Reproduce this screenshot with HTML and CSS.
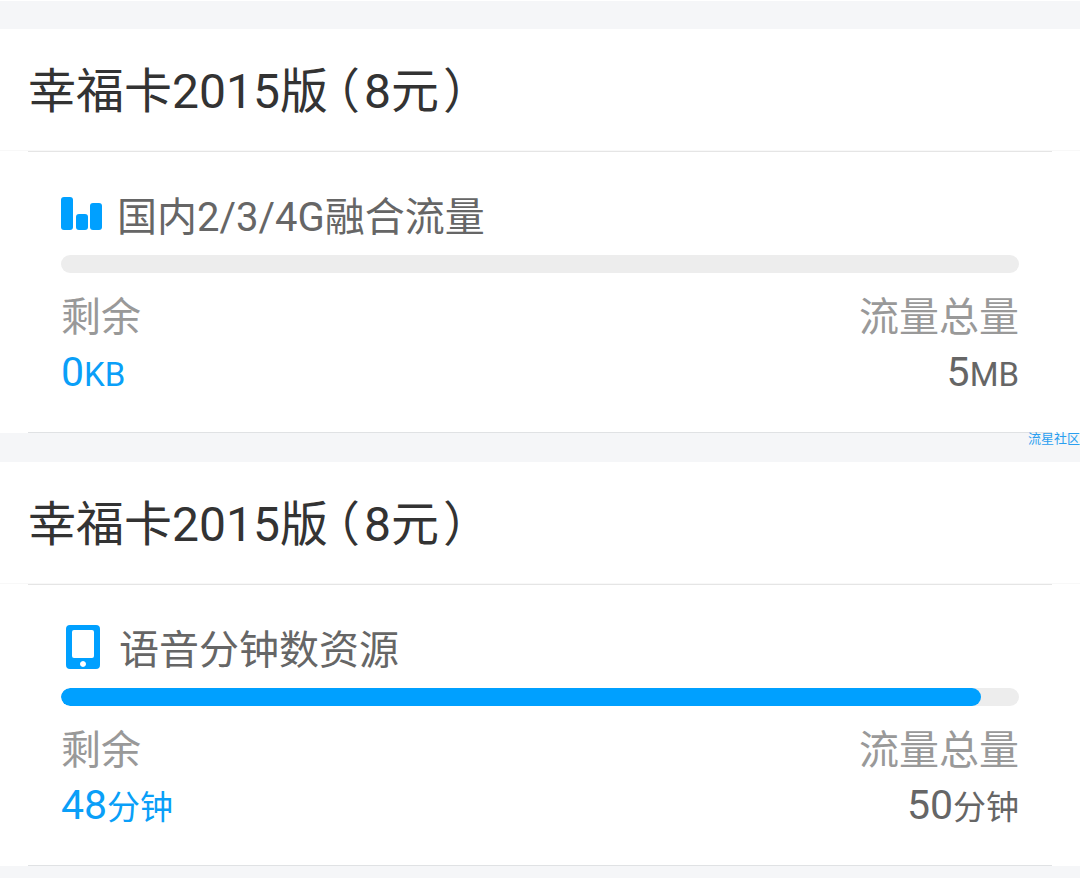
FILE: index.html
```html
<!DOCTYPE html>
<html lang="zh-CN">
<head>
<meta charset="utf-8">
<meta name="viewport" content="width=device-width, initial-scale=1">
<title>套餐余量</title>
<link rel="stylesheet" href="styles.css">
</head>
<body>
<main class="plans">
  <section class="plan">
    <h2 class="plan-title">幸福卡2015版<span class="open">（</span>8元<span class="close">）</span></h2>
    <div class="usage">
      <h3 class="usage-title">
        <svg class="icon" viewBox="0 0 44 52" aria-hidden="true"><rect x="0" y="5" width="12" height="33" rx="3"/><rect x="15" y="22" width="12" height="16" rx="3"/><rect x="29" y="11" width="12" height="27" rx="3"/></svg>
        <span>国内2/3/4G融合流量</span>
      </h3>
      <div class="bar" role="progressbar" aria-label="剩余流量" aria-valuenow="0" aria-valuemin="0" aria-valuemax="5"><div class="fill" style="width:0%"></div></div>
      <dl class="stats">
        <div class="stat"><dt>剩余</dt><dd class="left">0<small>KB</small></dd></div>
        <div class="stat total"><dt>流量总量</dt><dd>5<small>MB</small></dd></div>
      </dl>
    </div>
    <span class="watermark">流星社区</span>
  </section>
  <section class="plan">
    <h2 class="plan-title">幸福卡2015版<span class="open">（</span>8元<span class="close">）</span></h2>
    <div class="usage">
      <h3 class="usage-title">
        <svg class="icon phone" viewBox="0 0 46 52" aria-hidden="true"><path fill-rule="evenodd" d="M9 0H35Q39 0 39 4V40Q39 44 35 44H9Q5 44 5 40V4Q5 0 9 0ZM13 5Q11 5 11 7V31Q11 33 13 33H31Q33 33 33 31V7Q33 5 31 5ZM22 36a3 3 0 1 0 .01 0Z"/></svg>
        <span>语音分钟数资源</span>
      </h3>
      <div class="bar" role="progressbar" aria-label="剩余分钟数" aria-valuenow="48" aria-valuemin="0" aria-valuemax="50"><div class="fill" style="width:96%"></div></div>
      <dl class="stats">
        <div class="stat"><dt>剩余</dt><dd class="left">48<small>分钟</small></dd></div>
        <div class="stat total"><dt>流量总量</dt><dd>50<small>分钟</small></dd></div>
      </dl>
    </div>
  </section>
</main>
</body>
</html>
```
FILE: styles.css
```css
* { box-sizing: border-box; }
body {
  margin: 0;
  background: #f5f6f8;
  color: #333;
  font-family: Roboto, "Noto Sans CJK SC", sans-serif;
}
h2, h3, dl, dd { margin: 0; font-weight: 400; }
.plans {
  display: flex;
  flex-direction: column;
  gap: 29px;
  padding: 28px 0 12px;
  border-top: 1px solid #fff;
}
.plan { position: relative; background: #fff; }
.plan-title {
  padding: 27px 28px 22px;
  border-bottom: 1px solid #f8f8f8;
  font-size: 48px;
  line-height: 72px;
}
.open,
.close { font-feature-settings: "halt"; }
.open { margin: 0 4px 0 8px; }
.close { margin-left: 4px; }
.usage {
  margin: 0 28px;
  padding: 38px 33px 32px;
  border-top: 1px solid #e5e5e5;
  border-bottom: 1px solid #e0e2e4;
}
.usage-title {
  display: flex;
  align-items: center;
  gap: 12px;
  color: #666;
  font-size: 40px;
  line-height: 56px;
}
.icon { width: 44px; height: 52px; fill: #00a0ff; }
.phone { width: 46px; }
.bar {
  height: 18px;
  margin-top: 9px;
  overflow: hidden;
  border-radius: 9px;
  background: #ededed;
}
.fill { height: 100%; border-radius: 9px; background: #00a0ff; }
.stats {
  display: flex;
  justify-content: space-between;
  margin-top: 19px;
}
.total { text-align: right; }
.stat dt {
  color: #999;
  font-size: 40px;
  line-height: 52px;
}
.stat dd {
  color: #666;
  font-size: 41px;
  line-height: 56px;
}
.stat .left { color: #0a9ff8; }
.stat small { font-size: 33px; line-height: 1; }
.watermark {
  position: absolute;
  right: 0;
  bottom: -16px;
  color: #2a9ff0;
  font-size: 13px;
  line-height: 20px;
}
```
